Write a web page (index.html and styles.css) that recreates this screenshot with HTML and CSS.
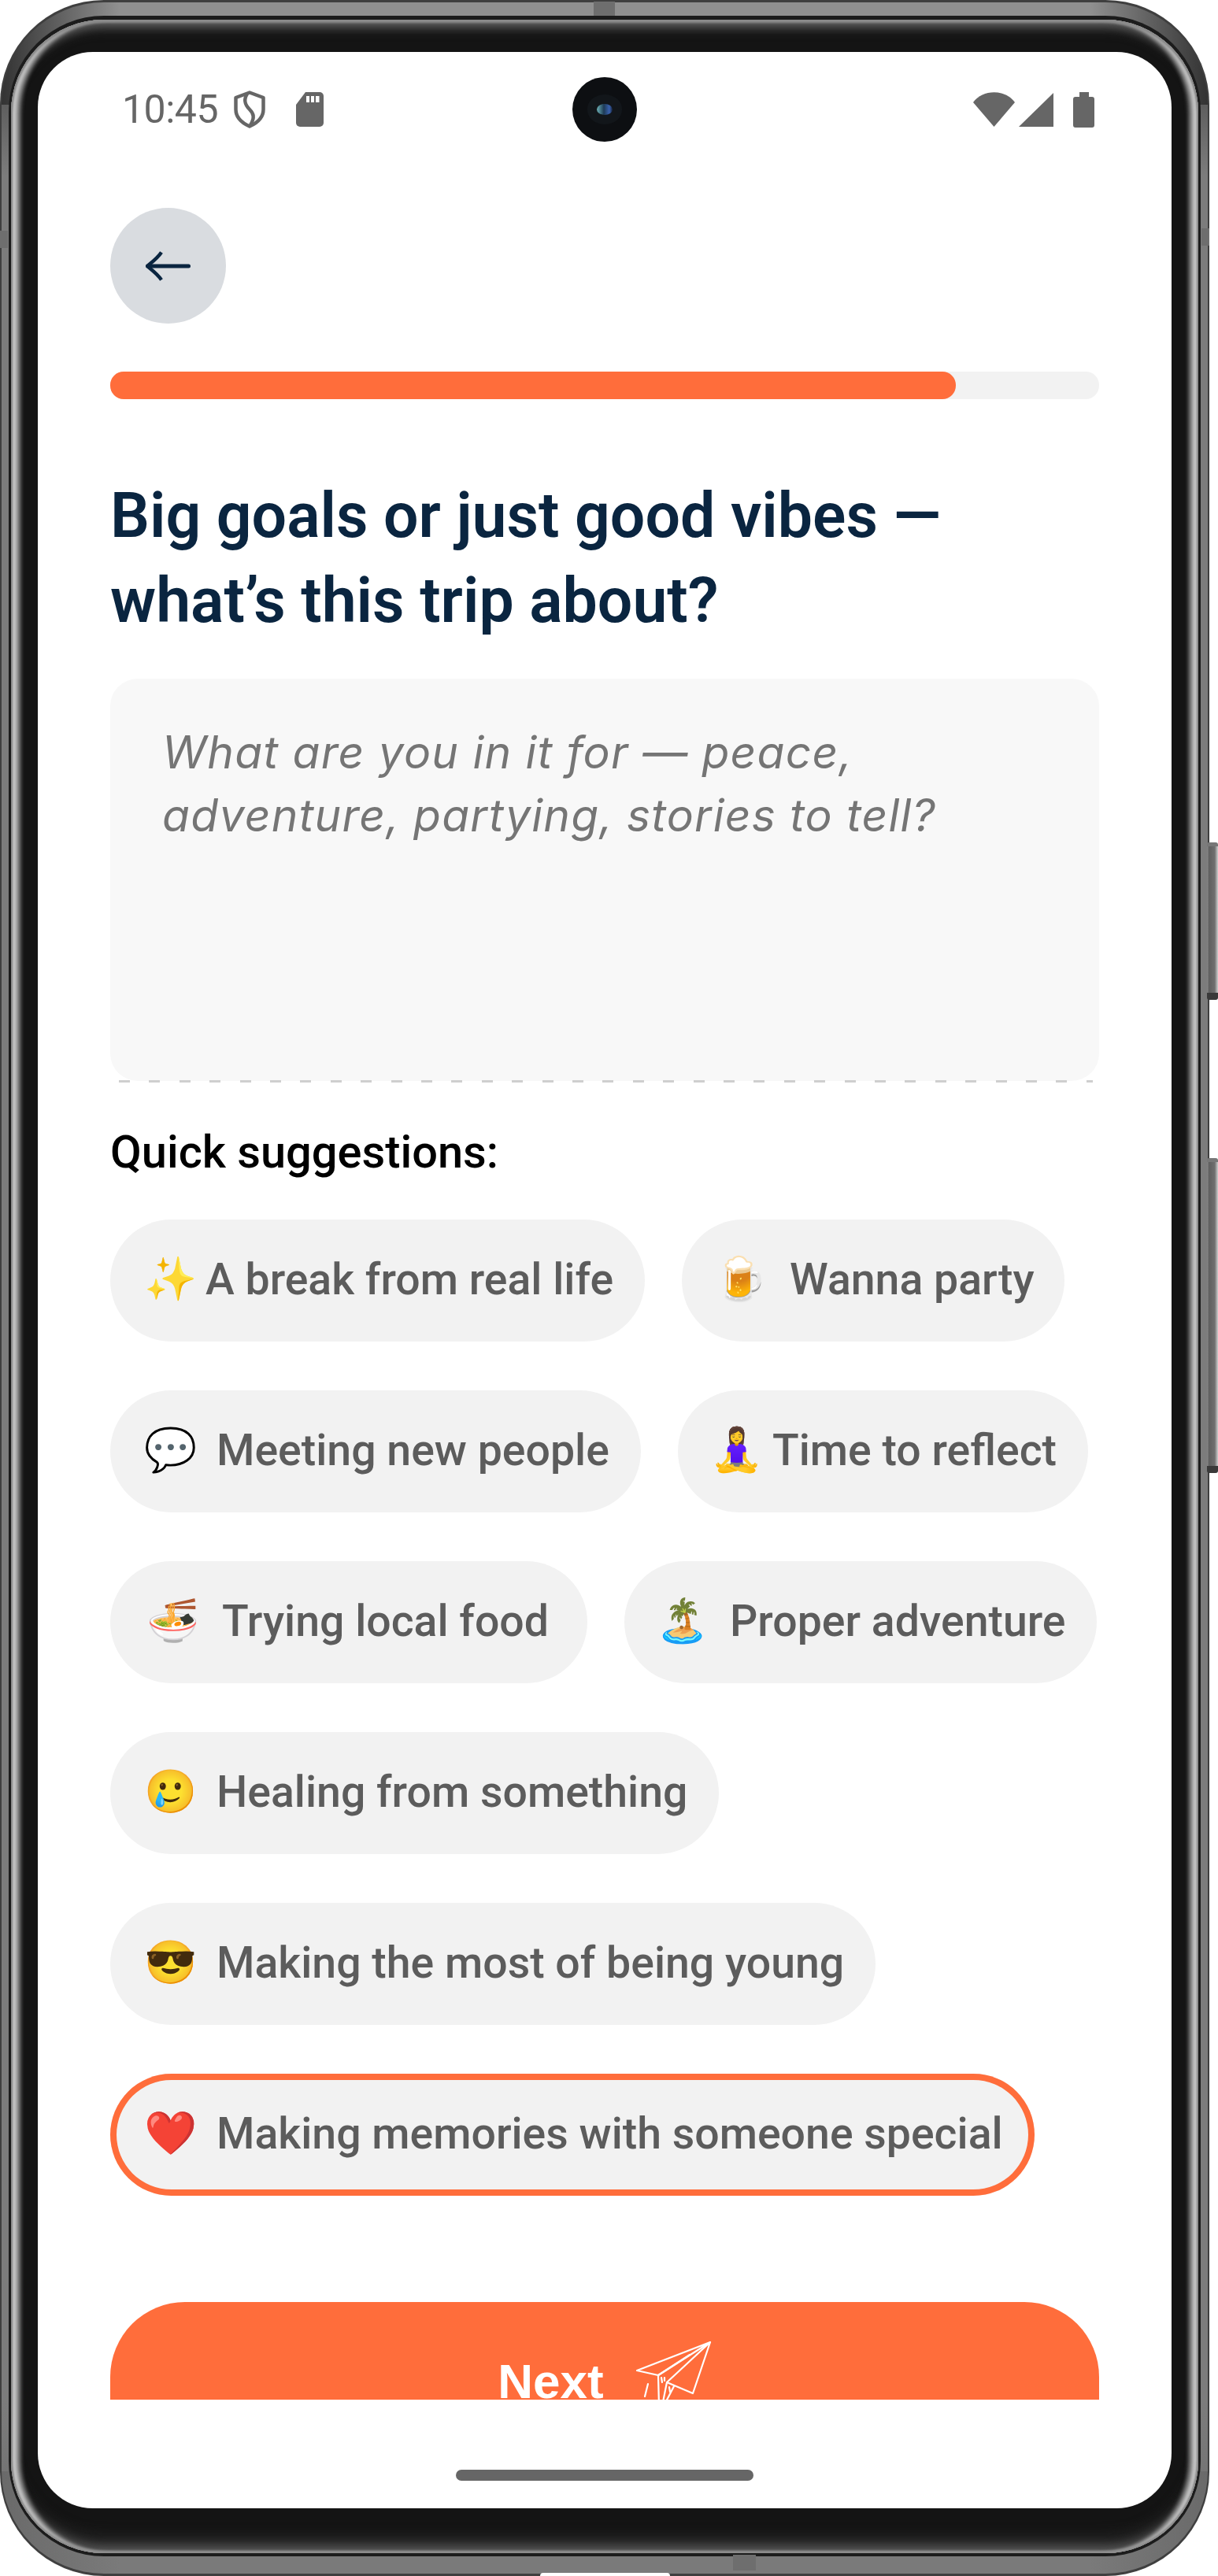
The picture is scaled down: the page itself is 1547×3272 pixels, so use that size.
FILE: index.html
```html
<!DOCTYPE html>
<html lang="en">
<head>
<meta charset="utf-8">
<title>Trip goals</title>
<link rel="stylesheet" href="styles.css">
</head>
<body>
<div class="phone">
  <span class="side-btn side-btn-power"></span>
  <span class="side-btn side-btn-volume"></span>
  <span class="seam seam-top"></span>
  <span class="seam seam-bottom"></span>
  <span class="seam seam-left"></span>
  <span class="seam seam-right"></span>
  <span class="port"></span>
  <div class="metal">
    <div class="groove">
      <div class="bezel">
        <div class="screen">
          <span class="camera"><span class="lens"></span></span>
          <header class="statusbar">
            <div class="status-left">
              <span class="clock">10:45</span>
              <svg class="ic-shield" viewBox="0 0 40 48"><path d="M20 2.500 37.500 9V24C37.500 34 30 41 20 45.500 10 41 2.500 34 2.500 24V9Z" fill="none" stroke="#666" stroke-width="4.500" stroke-linejoin="round"/><path d="M17 4C12 12 14 18 20 24 25 29 27 34 21 44" fill="none" stroke="#666" stroke-width="4.500"/></svg>
              <svg class="ic-sd" viewBox="0 0 35 44"><path d="M12 0H30a5 5 0 0 1 5 5V39a5 5 0 0 1-5 5H5a5 5 0 0 1-5-5V16Z" fill="#666"/><path d="M13 5h4v8h-4zM19 5h4v8h-4zM25 5h4.500v8H25z" fill="#fff"/></svg>
            </div>
            <div class="status-right">
              <svg class="ic-wifi" viewBox="0 0 53 44"><path d="M0 13C12-4 41-4 53 13L26.500 44Z" fill="#666"/></svg>
              <svg class="ic-signal" viewBox="0 0 44 43"><path d="M44 0V43H0Z" fill="#666"/></svg>
              <svg class="ic-battery" viewBox="0 0 27 45"><path d="M8 0H20V6H24a3 3 0 0 1 3 3V42a3 3 0 0 1-3 3H3a3 3 0 0 1-3-3V9a3 3 0 0 1 3-3H8Z" fill="#666"/></svg>
            </div>
          </header>
          <main class="content">
            <button class="back" type="button" aria-label="Back">
              <svg class="ic-back" viewBox="0 0 57 38"><path d="M20 1.500C15 9 8 14 2 19 8 24 15 29 20 36.500" fill="none" stroke="#0a2540" stroke-width="4.500"/><path d="M3 19H54.500" fill="none" stroke="#0a2540" stroke-width="5" stroke-linecap="round"/></svg>
            </button>
            <div class="progress"><div class="progress-fill"></div></div>
            <h1 class="title">Big goals or just good vibes —<br>what’s this trip about?</h1>
            <div class="field">
              <p class="placeholder">What are you in it for — peace,<br>adventure, partying, stories to tell?</p>
            </div>
            <h2 class="quick">Quick suggestions:</h2>
            <div class="chips">
              <div class="chip-row">
                <div class="chip chip-1"><span class="emoji">✨</span><span>A break from real life</span></div>
                <div class="chip chip-2"><span class="emoji">🍺</span><span>Wanna party</span></div>
              </div>
              <div class="chip-row">
                <div class="chip chip-3"><span class="emoji">💬</span><span>Meeting new people</span></div>
                <div class="chip chip-4"><span class="emoji">🧘‍♀️</span><span>Time to reflect</span></div>
              </div>
              <div class="chip-row">
                <div class="chip chip-5"><span class="emoji">🍜</span><span>Trying local food</span></div>
                <div class="chip chip-6"><span class="emoji">🏝️</span><span>Proper adventure</span></div>
              </div>
              <div class="chip-row">
                <div class="chip chip-3"><span class="emoji">🥲</span><span>Healing from something</span></div>
              </div>
              <div class="chip-row">
                <div class="chip chip-3"><span class="emoji">😎</span><span>Making the most of being young</span></div>
              </div>
              <div class="chip-row">
                <div class="chip chip-3 chip-selected"><span class="emoji">❤️</span><span>Making memories with someone special</span></div>
              </div>
            </div>
            <button class="next" type="button">
              <span class="next-label">Next</span>
              <svg class="ic-plane" viewBox="0 0 96 90"><g fill="none" stroke="#fff" stroke-width="2.200" stroke-linejoin="round" stroke-linecap="round"><path d="M94 1 1 37 28 43Z"/><path d="M94 1 72 66 39 52Z"/><path d="M28 43 68 17"/><path d="M28 43 29 82"/><path d="M39 52 33 82"/><path d="M48 57 35 82"/><path d="M32 46 33 52M36 46 36 50M42 58 43 64"/><path d="M15 54 11 70"/></g></svg>
            </button>
          </main>
          <div class="homebar"></div>
        </div>
      </div>
    </div>
  </div>
</div>
</body>
</html>
```

FILE: styles.css
```css
* { box-sizing: border-box; }
html, body { margin: 0; padding: 0; background: #fff; }
body { width: 1547px; height: 3272px; overflow: hidden; font-family: Roboto, "Noto Sans", sans-serif; }

.phone {
  position: relative;
  width: 1536px;
  height: 3272px;
  padding: 3px 2px;
  border-radius: 132px;
  background: #3f3f3f;
}

.metal {
  height: 100%;
  padding: 17px 9px 22px;
  border-radius: 130px;
  background-color: #3a3a3a;
  background-image:
    linear-gradient(90deg, #333 0, #909090 150px, #909090 calc(100% - 150px), #333 100%),
    linear-gradient(90deg, #6a6a6a 0, #7a7a7a 150px, #7a7a7a calc(100% - 150px), #6a6a6a 100%),
    linear-gradient(180deg, #333 0, #7c7c7c 220px, #7c7c7c calc(100% - 220px), #6a6a6a 100%);
  background-size: 100% 130px, 100% 130px, 100% 100%;
  background-position: top, bottom, center;
  background-repeat: no-repeat;
}

.groove {
  height: 100%;
  padding: 5px 3px 4px;
  border-radius: 121px;
  background: #1c1c1c;
}

.bezel {
  height: 100%;
  padding: 41px 34px 57px;
  border-radius: 118px;
  background: #141414;
  box-shadow:
    inset 0 4px 3px #8a8a8a,
    inset 0 -3px 3px #8c8c8c,
    inset 2px 0 2px #8a8a8a,
    inset -2px 0 2px #8a8a8a,
    inset 8px 0 4px #c4c4c4,
    inset -8px 0 4px #c4c4c4,
    inset 13px 0 4px #6a6a6a,
    inset -13px 0 4px #6a6a6a,
    inset 0 10px 8px #555,
    inset 0 -10px 12px #555,
    inset 0 18px 8px #232323,
    inset 0 -24px 14px #232323;
}

.side-btn {
  position: absolute;
  right: -11px;
  width: 14px;
  border-radius: 3px;
  background: linear-gradient(90deg, #8a8a8a 0, #5f5f5f 20%, #6f6f6f 70%, #cfcfcf 100%);
}
.side-btn-power { top: 1070px; height: 200px; border-top: 5px solid #777; border-bottom: 9px solid #3a3a3a; }
.side-btn-volume { top: 1471px; height: 400px; border-top: 5px solid #777; border-bottom: 9px solid #3a3a3a; }

.seam { position: absolute; background: #6e6e6e; }
.seam-top { left: 754px; top: 2px; width: 27px; height: 18px; }
.seam-bottom { left: 931px; bottom: 7px; width: 29px; height: 20px; }
.seam-left { left: 0; top: 293px; width: 10px; height: 22px; }
.seam-right { right: 0; top: 290px; width: 10px; height: 22px; }
.port { position: absolute; left: 686px; bottom: 0; width: 165px; height: 4px; border-radius: 4px 4px 0 0; background: #fff; }

.screen {
  position: relative;
  height: 100%;
  border-radius: 70px;
  background: #fff;
  overflow: hidden;
}

.camera {
  position: absolute;
  left: 679px;
  top: 32px;
  width: 82px;
  height: 82px;
  border-radius: 50%;
  background: #0d0f12;
  display: flex;
  align-items: center;
  justify-content: center;
}
.lens {
  width: 20px;
  height: 14px;
  border-radius: 50%;
  background: linear-gradient(90deg, #6fb4b8 0, #1d3a55 45%, #3a62b0 80%, #16233a 100%);
  box-shadow: 0 0 0 12px #12161a;
}

.statusbar {
  height: 146px;
  padding: 0 98px 0 107px;
  display: flex;
  align-items: center;
  justify-content: space-between;
  color: #666;
}
.status-left, .status-right { display: flex; align-items: center; }
.clock { font-size: 50px; line-height: 1; letter-spacing: -.5px; width: 142px; }
.ic-shield { width: 40px; height: 48px; }
.ic-sd { width: 35px; height: 44px; margin-left: 39px; }
.ic-wifi { width: 53px; height: 44px; }
.ic-signal { width: 44px; height: 43px; margin-left: 5px; }
.ic-battery { width: 27px; height: 45px; margin-left: 25px; }

.content {
  height: 2836px;
  padding: 52px 92px 0;
  overflow: hidden;
}

.back {
  display: flex;
  align-items: center;
  justify-content: center;
  width: 147px;
  height: 147px;
  padding: 0;
  border: 0;
  border-radius: 50%;
  background: #d9dce0;
}
.ic-back { width: 57px; height: 38px; }

.progress { height: 35px; margin-top: 61px; border-radius: 17px; background: #f2f2f2; }
.progress-fill { width: 1074px; height: 100%; border-radius: 17px; background: #ff6d3b; }

.title {
  margin: 94px 0 0;
  font-size: 78.75px;
  line-height: 108px;
  font-weight: 600;
  color: #0a2540;
}

.field {
  position: relative;
  height: 511px;
  margin-top: 45px;
  padding: 54px 40px 0 66px;
  border-radius: 35px;
  background: #f8f8f8;
}
.field::after {
  content: "";
  position: absolute;
  left: 11px;
  right: 8px;
  bottom: -2px;
  height: 3px;
  background: repeating-linear-gradient(90deg, #cfcfcf 0, #cfcfcf 14px, transparent 14px, transparent 38.4px);
}
.placeholder {
  margin: 0;
  font-family: Inter, "Open Sans", sans-serif;
  font-style: italic;
  font-weight: 400;
  font-size: 57px;
  line-height: 80px;
  letter-spacing: 1.2px;
  color: #757575;
}

.quick {
  margin: 54px 0 0;
  font-size: 57.75px;
  line-height: 72px;
  font-weight: 500;
  color: #000;
}

.chips { display: flex; flex-direction: column; gap: 62px; margin-top: 50px; }
.chip-row { display: flex; gap: 47px; }
.chip {
  display: flex;
  align-items: center;
  height: 155px;
  padding: 0 40px 3px 43px;
  gap: 32px;
  border-radius: 78px;
  background: #f2f2f2;
  font-size: 55.4px;
  font-weight: 500;
  color: #5c5c5c;
  white-space: nowrap;
}
.chip-1 { gap: 18px; }
.chip-2 { gap: 36px; padding-left: 41px; padding-right: 38px; }
.chip-3 { gap: 32px; }
.chip-4 { gap: 19px; padding-left: 41px; padding-right: 40px; }
.chip-5 { gap: 36px; padding-left: 46px; padding-right: 49px; }
.chip-6 { gap: 34px; padding-left: 40px; padding-right: 40px; }
.chip-selected { box-shadow: inset 0 0 0 8px #ff6d3b; }
.emoji { font-size: 54px; line-height: 60px; width: 60px; text-align: center; margin-top: -1px; font-family: "Noto Color Emoji", sans-serif; }

.next {
  display: flex;
  align-items: flex-start;
  justify-content: center;
  gap: 41px;
  width: 100%;
  height: 240px;
  margin-top: 135px;
  padding: 50px 0 0 0;
  border: 0;
  border-radius: 95px;
  background: #ff6d3b;
  color: #fff;
}
.next-label { margin-top: 28px; font: 700 62px/46px "Liberation Sans", Arial, sans-serif; }
.ic-plane { width: 96px; height: 90px; }

.homebar { width: 378px; height: 14px; margin: 89px auto 0; border-radius: 7px; background: #666; }
```
